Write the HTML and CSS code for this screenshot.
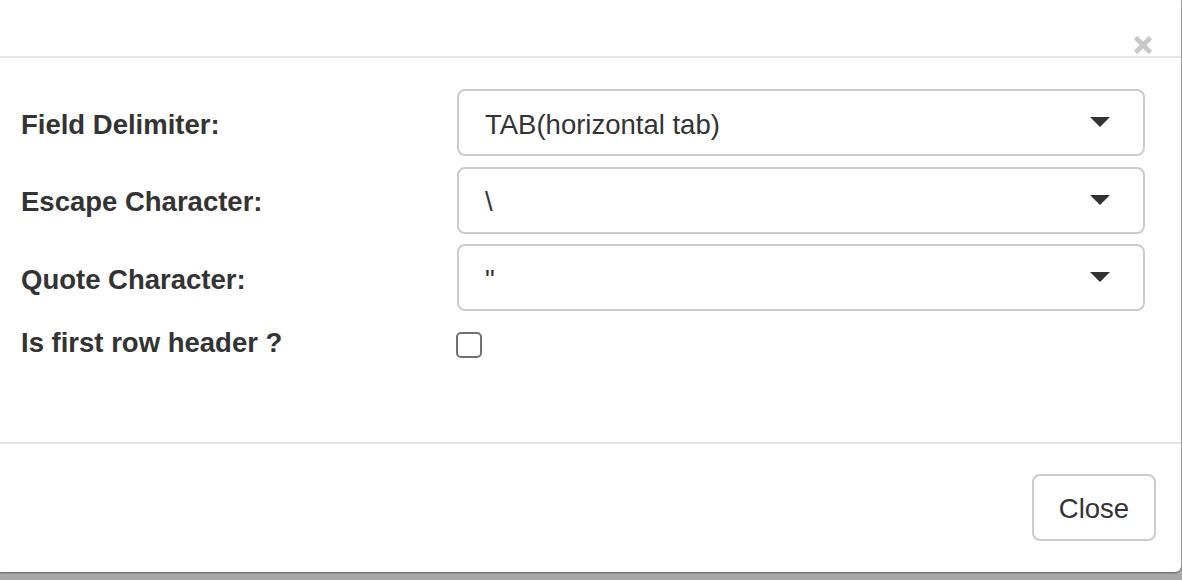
FILE: index.html
```html
<!DOCTYPE html>
<html lang="en">
<head>
<meta charset="utf-8">
<title>CSV options</title>
<link rel="stylesheet" href="styles.css">
</head>
<body>
<div class="modal">
  <div class="modal-header">
    <button class="close-x" type="button" aria-label="Close">
      <svg width="20" height="20" viewBox="0 0 20 20" aria-hidden="true">
        <path d="M2.5 2.5 L17.5 17.5 M17.5 2.5 L2.5 17.5" stroke="#c8c8c8" stroke-width="4.6" stroke-linecap="butt"/>
      </svg>
    </button>
  </div>
  <div class="modal-body">
    <form class="form-grid">
      <label class="lbl" for="fd">Field Delimiter:</label>
      <div class="select-wrap">
        <select id="fd" class="ctl">
          <option>TAB(horizontal tab)</option>
          <option>COMMA</option>
        </select>
        <svg class="caret" width="20" height="10" viewBox="0 0 20 10" aria-hidden="true"><path d="M0 0 H20 L10 10 Z" fill="#333"/></svg>
      </div>

      <label class="lbl" for="ec">Escape Character:</label>
      <div class="select-wrap">
        <select id="ec" class="ctl">
          <option>\</option>
        </select>
        <svg class="caret" width="20" height="10" viewBox="0 0 20 10" aria-hidden="true"><path d="M0 0 H20 L10 10 Z" fill="#333"/></svg>
      </div>

      <label class="lbl" for="qc">Quote Character:</label>
      <div class="select-wrap">
        <select id="qc" class="ctl">
          <option>"</option>
        </select>
        <svg class="caret" width="20" height="10" viewBox="0 0 20 10" aria-hidden="true"><path d="M0 0 H20 L10 10 Z" fill="#333"/></svg>
      </div>

      <label class="lbl lbl-check" for="hdr">Is first row header ?</label>
      <div class="check-cell">
        <input id="hdr" class="check" type="checkbox">
      </div>
    </form>
  </div>
  <div class="modal-footer">
    <button class="btn" type="button">Close</button>
  </div>
</div>
</body>
</html>
```

FILE: styles.css
```css
* {
  box-sizing: border-box;
}

html, body {
  margin: 0;
  padding: 0;
}

body {
  width: 1182px;
  height: 580px;
  overflow: hidden;
  background: #a9a9a9;
  font-family: "Liberation Sans", Arial, Helvetica, sans-serif;
  font-size: 27.5px;
  color: #333;
}

.modal {
  width: 1181px;
  height: 572px;
  background: #fff;
  border-radius: 0 0 6px 0;
  box-shadow: 0 1px 2px rgba(0, 0, 0, 0.45);
  display: flex;
  flex-direction: column;
}

.modal-header {
  height: 58px;
  border-bottom: 2px solid #e5e5e5;
  display: flex;
  justify-content: flex-end;
  align-items: flex-end;
  padding-right: 28px;
}

.close-x {
  border: 0;
  background: transparent;
  padding: 0;
  margin: 0 0 1px 0;
  width: 20px;
  height: 20px;
  display: block;
  cursor: pointer;
}

.close-x svg {
  display: block;
}

.modal-body {
  height: 386px;
  padding: 31px 36px 0 21px;
  border-bottom: 2px solid #e5e5e5;
}

.form-grid {
  display: grid;
  grid-template-columns: 436px 1fr;
  grid-template-rows: 67px 67px 67px auto;
  row-gap: 10.5px;
  margin: 0;
}

.lbl {
  font-weight: bold;
  color: #333;
  align-self: center;
  line-height: 1.15;
  padding-top: 4px;
}

.lbl-check {
  align-self: start;
  padding-top: 0;
  margin-top: 5px;
}

.select-wrap {
  position: relative;
  height: 67px;
}

.ctl {
  -webkit-appearance: none;
  appearance: none;
  width: 100%;
  height: 67px;
  border: 2px solid #ccc;
  border-radius: 8px;
  background: #fff;
  color: #333;
  font-family: inherit;
  font-size: 27.5px;
  padding: 3px 60px 0 26px;
  margin: 0;
  outline: none;
}

.caret {
  position: absolute;
  right: 35px;
  top: 28px;
  pointer-events: none;
}

.check-cell {
  padding-top: 10px;
}

.check {
  -webkit-appearance: none;
  appearance: none;
  display: block;
  width: 26px;
  height: 26px;
  margin: 0 0 0 -1px;
  border: 2px solid #717171;
  border-radius: 5px;
  background: #fff;
}

.modal-footer {
  flex: 1;
  display: flex;
  justify-content: flex-end;
  align-items: flex-start;
  padding: 30px 25px 0 0;
}

.btn {
  width: 124px;
  height: 67px;
  border: 2px solid #ccc;
  border-radius: 8px;
  background: #fff;
  color: #333;
  font-family: inherit;
  font-size: 27.5px;
  padding: 2px 0 0 0;
  cursor: pointer;
}
```
